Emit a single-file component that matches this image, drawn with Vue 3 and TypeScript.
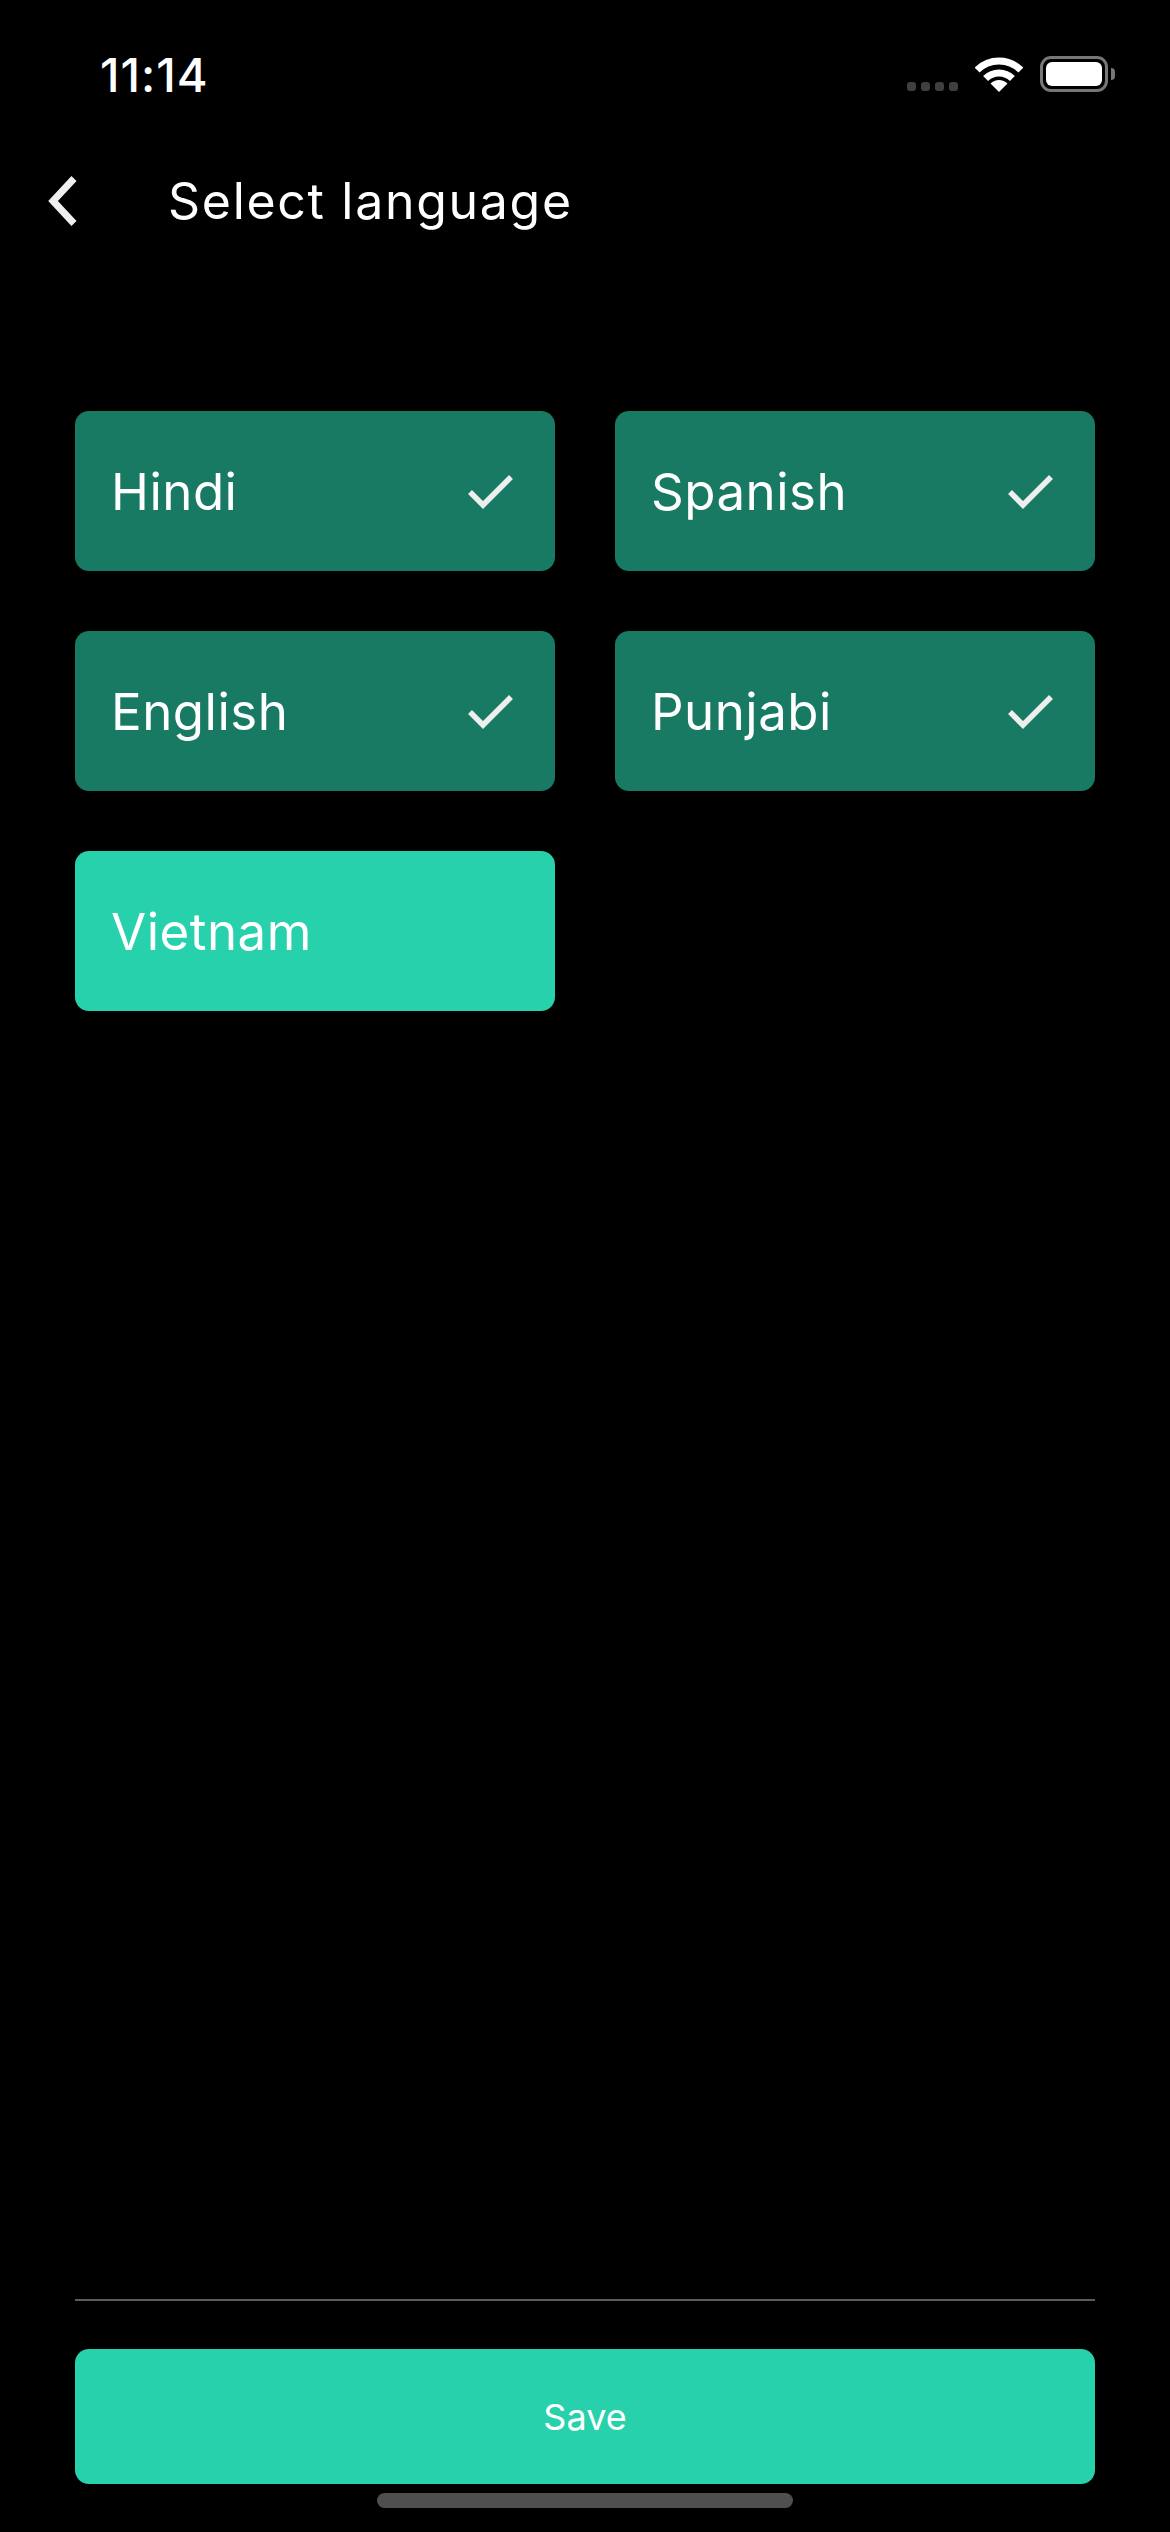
<script setup lang="ts">
interface Language {
  name: string
  done: boolean
}

const languages: Language[] = [
  { name: 'Hindi', done: true },
  { name: 'Spanish', done: true },
  { name: 'English', done: true },
  { name: 'Punjabi', done: true },
  { name: 'Vietnam', done: false },
]
</script>

<template>
  <div class="screen">
    <div class="status">
      <span class="time">11:14</span>
      <div class="status__icons">
        <div class="dots"><i></i><i></i><i></i><i></i></div>
        <svg class="wifi" width="48" height="36" viewBox="0 0 48 36">
          <path d="M2.1 14.1A31 31 0 0 1 45.9 14.1" fill="none" stroke="#fff" stroke-width="7" />
          <path d="M10.6 22.6A19 19 0 0 1 37.4 22.6" fill="none" stroke="#fff" stroke-width="7" />
          <path d="M24 36L15.5 27.5A12 12 0 0 1 32.5 27.5Z" fill="#fff" />
        </svg>
        <div class="battery"><div class="battery__fill"></div></div>
        <div class="battery__nub"></div>
      </div>
    </div>

    <header class="head">
      <svg class="back" width="30" height="50" viewBox="0 0 30 50">
        <path d="M26 2.5L5 25L26 47.5" fill="none" stroke="#eee" stroke-width="7" />
      </svg>
      <h1 class="head__title">Select language</h1>
    </header>

    <main class="grid">
      <div v-for="lang in languages" :key="lang.name" class="card" :class="{ 'card--done': lang.done }">
        <span>{{ lang.name }}</span>
        <svg v-if="lang.done" class="check" width="46" height="36" viewBox="0 0 46 36">
          <path d="M2 19L15 32L43 4" fill="none" stroke="#eee" stroke-width="5.5" />
        </svg>
      </div>
    </main>

    <footer class="foot">
      <div class="foot__line"></div>
      <button class="save">Save</button>
      <div class="home"></div>
    </footer>
  </div>
</template>

<style scoped>
.screen {
  width: 1170px;
  height: 2532px;
  background: #000;
  color: #fff;
  font-family: Inter, "Noto Sans", sans-serif;
  display: flex;
  flex-direction: column;
}

.status {
  height: 148px;
  padding: 0 55px 0 100px;
  display: flex;
  justify-content: space-between;
  align-items: center;
  box-sizing: border-box;
}

.time {
  font-size: 47px;
  font-weight: 500;
  letter-spacing: 1px;
}

.status__icons {
  display: flex;
  align-items: flex-end;
}

.dots {
  display: flex;
  gap: 5px;
  margin-right: 17px;
  margin-bottom: 1px;
}

.dots i {
  width: 9px;
  height: 9px;
  border-radius: 3px;
  background: #3f3f3f;
}

.wifi {
  margin-right: 17px;
}

.battery {
  width: 68px;
  height: 36px;
  border: 3px solid #777;
  border-radius: 11px;
  padding: 3px;
  box-sizing: border-box;
}

.battery__fill {
  height: 100%;
  background: #fff;
  border-radius: 6px;
}

.battery__nub {
  width: 4px;
  height: 12px;
  margin: 0 0 12px 3px;
  background: #777;
  border-radius: 0 6px 6px 0;
}

.head {
  height: 106px;
  padding-left: 48px;
  display: flex;
  align-items: center;
}

.head__title {
  margin: 0 0 0 90px;
  font-size: 50px;
  font-weight: 400;
  letter-spacing: 1.7px;
}

.grid {
  margin-top: 157px;
  padding: 0 75px;
  display: grid;
  grid-template-columns: 480px 480px;
  gap: 60px;
}

.card {
  height: 160px;
  padding: 0 41px 0 36px;
  display: flex;
  justify-content: space-between;
  align-items: center;
  background: #27d1ac;
  border-radius: 14px;
  font-size: 51px;
  letter-spacing: 0.5px;
  box-sizing: border-box;
}

.card--done {
  background: #197a64;
}

.foot {
  margin-top: auto;
  padding: 0 75px 24px;
  display: flex;
  flex-direction: column;
  align-items: center;
}

.foot__line {
  width: 100%;
  height: 2px;
  background: #5c5c5c;
}

.save {
  width: 100%;
  height: 135px;
  margin-top: 48px;
  border: 0;
  border-radius: 14px;
  background: #27d1ac;
  color: #fff;
  font-family: inherit;
  font-size: 36px;
}

.home {
  width: 416px;
  height: 15px;
  margin-top: 9px;
  border-radius: 8px;
  background: #4f4f4f;
}
</style>

<style>
html, body { background: #000; }
</style>
